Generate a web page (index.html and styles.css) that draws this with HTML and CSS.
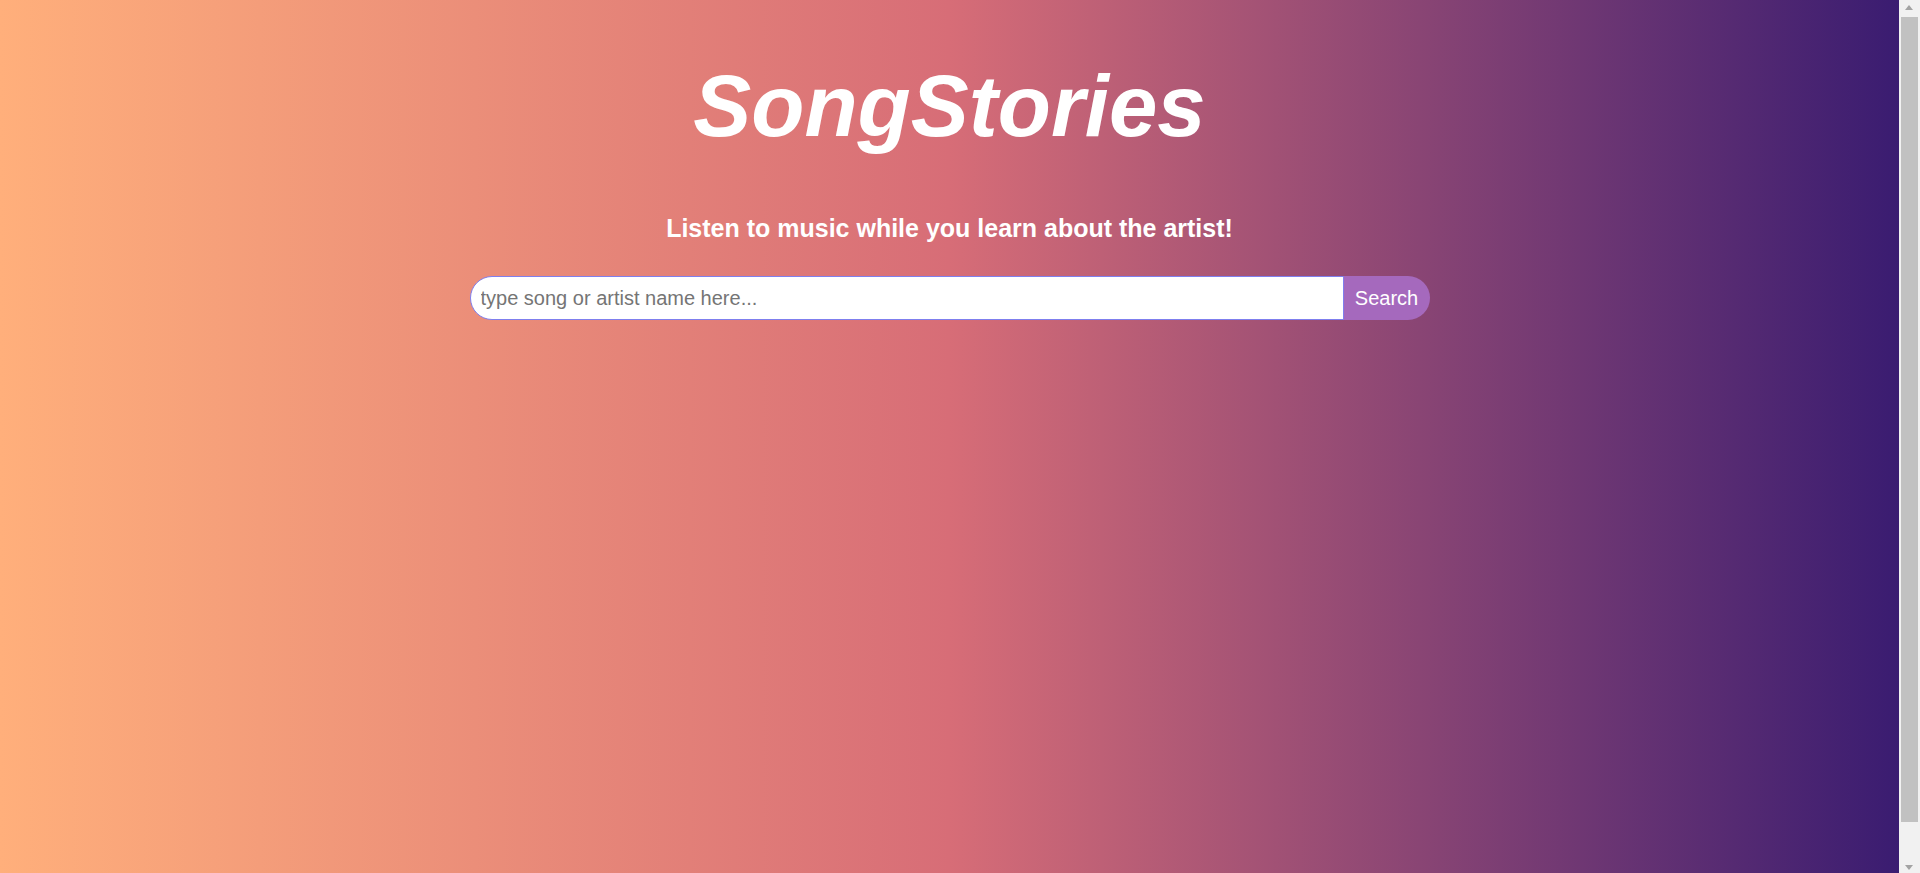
FILE: index.html
```html
<!DOCTYPE html>
<html lang="en">
<head>
<meta charset="utf-8">
<title>SongStories</title>
<link rel="stylesheet" href="styles.css">
</head>
<body>
<main class="page">
  <h1 class="title">SongStories</h1>
  <h2 class="subtitle">Listen to music while you learn about the artist!</h2>
  <form class="search" onsubmit="return false">
    <input class="search-input" type="text" placeholder="type song or artist name here...">
    <button class="search-btn" type="submit">Search</button>
  </form>
</main>
<div class="scrollbar" aria-hidden="true">
  <div class="sb-arrow sb-up"></div>
  <div class="sb-track"><div class="sb-thumb"></div></div>
  <div class="sb-arrow sb-down"></div>
</div>
</body>
</html>
```
FILE: styles.css
```css
html, body {
  margin: 0;
  padding: 0;
}
body {
  font-family: "Liberation Sans", Arial, sans-serif;
  background: #f1f1f1;
  overflow: hidden;
}
.page {
  margin-right: 21px;
  height: 100vh;
  box-sizing: border-box;
  display: flex;
  flex-direction: column;
  align-items: center;
  padding-top: 56px;
  background: linear-gradient(to right, #ffaf7b, #d76d77, #3a1c71);
}
.title {
  margin: 0;
  font-size: 87px;
  font-style: italic;
  font-weight: bold;
  color: #fff;
  line-height: normal;
}
.subtitle {
  margin: 58px 0 0;
  font-size: 25px;
  font-weight: bold;
  color: #fff;
  line-height: normal;
}
.search {
  margin-top: 33px;
  display: flex;
  width: 960px;
  height: 44px;
}
.search-input {
  flex: 1;
  box-sizing: border-box;
  height: 44px;
  margin: 0;
  padding: 0 10px;
  border: 1px solid #7f7fee;
  border-radius: 22px 0 0 22px;
  background: #fff;
  font-family: "Liberation Sans", Arial, sans-serif;
  font-size: 20px;
  color: #333;
  outline: none;
}
.search-input::placeholder {
  color: #757575;
}
.search-btn {
  width: 86px;
  height: 44px;
  margin: 0;
  padding: 0;
  border: none;
  border-radius: 0 22px 22px 0;
  background: #a569bd;
  color: #fff;
  font-family: "Liberation Sans", Arial, sans-serif;
  font-size: 20px;
  cursor: pointer;
}
/* fake window scrollbar */
.scrollbar {
  position: fixed;
  top: 0;
  right: 0;
  width: 21px;
  height: 100vh;
  background: #f1f1f1;
  display: flex;
  flex-direction: column;
  align-items: center;
}
.sb-arrow {
  width: 17px;
  height: 17px;
  position: relative;
  flex: none;
}
.sb-up::after,
.sb-down::after {
  content: "";
  position: absolute;
  left: 4px;
  width: 0;
  height: 0;
  border-left: 4.5px solid transparent;
  border-right: 4.5px solid transparent;
}
.sb-up::after {
  top: 5px;
  border-bottom: 5px solid #a3a3a3;
}
.sb-down::after {
  bottom: 3px;
  border-top: 5px solid #a3a3a3;
}
.sb-track {
  flex: 1;
  width: 17px;
  display: flex;
  flex-direction: column;
}
.sb-thumb {
  height: 805px;
  background: #c1c1c1;
}
```
